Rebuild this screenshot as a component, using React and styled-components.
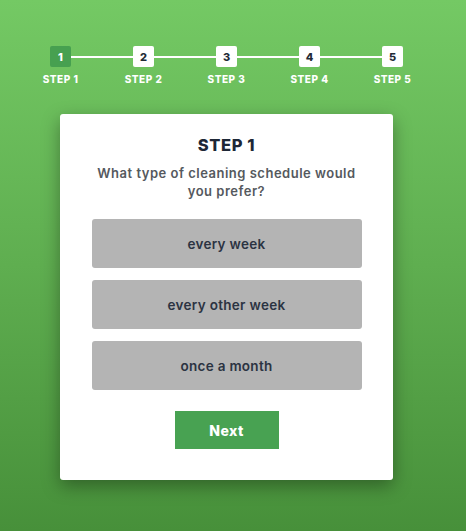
import React, { useState } from "react";
import styled, { createGlobalStyle } from "styled-components";

const GlobalStyle = createGlobalStyle`
  body {
    margin: 0;
    background: #ffffff;
    font-family: Inter, "DejaVu Sans", sans-serif;
  }
`;

const Page = styled.div`
  width: 466px;
  height: 531px;
  background: linear-gradient(180deg, #74c964 0%, #5fae50 50%, #47903a 100%);
  display: flex;
  flex-direction: column;
  align-items: center;
  padding: 46px 13px 0 0;
  box-sizing: border-box;
`;

const Stepper = styled.div`
  position: relative;
  display: grid;
  grid-template-columns: repeat(5, 83px);
`;

const Track = styled.div`
  position: absolute;
  top: 10px;
  left: 41px;
  right: 41px;
  height: 2px;
  background: #ffffff;
`;

const StepItem = styled.div`
  position: relative;
  display: flex;
  flex-direction: column;
  align-items: center;
  gap: 6px;
`;

const StepBox = styled.div`
  width: 21px;
  height: 21px;
  border-radius: 2px;
  display: flex;
  align-items: center;
  justify-content: center;
  font-size: 11px;
  font-weight: 800;
  background: ${({ $active }) => ($active ? "#47a050" : "#ffffff")};
  color: ${({ $active }) => ($active ? "#ffffff" : "#222a36")};
`;

const StepLabel = styled.div`
  font-size: 10px;
  font-weight: 800;
  color: #ffffff;
  letter-spacing: 0.5px;
`;

const Card = styled.div`
  margin-top: 29px;
  width: 333px;
  background: #ffffff;
  border-radius: 3px;
  box-shadow: 0 6px 18px rgba(0, 0, 0, 0.35);
  display: flex;
  flex-direction: column;
  align-items: center;
  padding: 21px 0 31px;
  box-sizing: border-box;
`;

const Title = styled.h2`
  margin: 0;
  font-size: 16.5px;
  font-weight: 800;
  color: #1d2736;
  letter-spacing: 0.6px;
`;

const Question = styled.p`
  margin: 9px 0 0;
  width: 268px;
  text-align: center;
  font-size: 13px;
  line-height: 18px;
  font-weight: 600;
  color: #55595e;
  letter-spacing: 0.5px;
`;

const Options = styled.div`
  margin-top: 19px;
  display: flex;
  flex-direction: column;
  gap: 12px;
`;

const Option = styled.button`
  width: 270px;
  height: 49px;
  border: none;
  border-radius: 3px;
  background: ${({ $selected }) => ($selected ? "#9e9e9e" : "#b4b4b4")};
  color: #2b3342;
  font-family: inherit;
  font-size: 13.5px;
  font-weight: 600;
  letter-spacing: 0.3px;
  cursor: pointer;
`;

const NextButton = styled.button`
  margin-top: 21px;
  width: 104px;
  height: 38px;
  border: none;
  background: #48a252;
  color: #ffffff;
  font-family: inherit;
  font-size: 14px;
  font-weight: 800;
  letter-spacing: 0.4px;
  cursor: pointer;
`;

const steps = [1, 2, 3, 4, 5];
const choices = ["every week", "every other week", "once a month"];

export default function App() {
  const [current] = useState(1);
  const [picked, setPicked] = useState(null);

  return (
    <>
      <GlobalStyle />
      <Page>
        <Stepper>
          <Track />
          {steps.map((n) => (
            <StepItem key={n}>
              <StepBox $active={n === current}>{n}</StepBox>
              <StepLabel>STEP {n}</StepLabel>
            </StepItem>
          ))}
        </Stepper>

        <Card>
          <Title>STEP {current}</Title>
          <Question>What type of cleaning schedule would you prefer?</Question>
          <Options>
            {choices.map((c) => (
              <Option key={c} $selected={picked === c} onClick={() => setPicked(c)}>
                {c}
              </Option>
            ))}
          </Options>
          <NextButton>Next</NextButton>
        </Card>
      </Page>
    </>
  );
}
